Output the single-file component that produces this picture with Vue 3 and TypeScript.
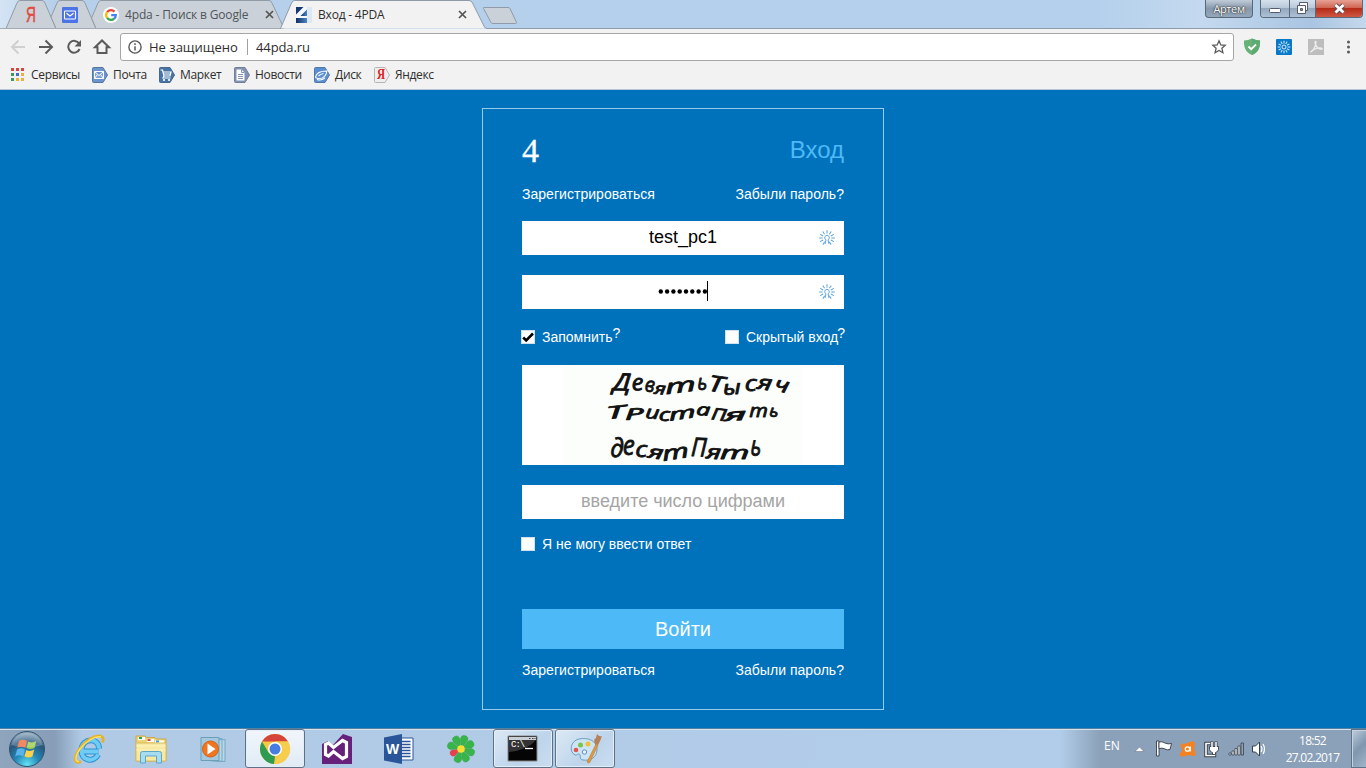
<script setup lang="ts">
import { ref } from 'vue'

interface Glyph {
  c: string
  x: number
  y: number
  size: number
  w: number
  rot: number
}

const g = (c: string, x: number, y: number, size: number, w: number, rot = 0): Glyph => ({ c, x, y, size, w, rot })

// Hand-placed letters of the captcha picture, in a 966 x 300 space
const glyphs: Glyph[] = [
  g('Д', 272, 76, 72, 52, 3), g('е', 330, 76, 68, 36, -4), g('в', 367, 80, 62, 30, 6), g('я', 396, 88, 50, 34, 6),
  g('т', 432, 82, 60, 92, -7), g('ь', 526, 76, 66, 30), g('Т', 556, 80, 66, 46, 8), g('ы', 604, 88, 60, 54, -4),
  g('с', 668, 79, 66, 36), g('я', 704, 74, 62, 44, 8), g('ч', 754, 80, 62, 44, 12),
  g('Т', 254, 160, 52, 56, -6), g('Р', 310, 163, 46, 56, -4), g('и', 369, 161, 54, 42, 5), g('с', 410, 167, 52, 34),
  g('т', 443, 162, 50, 80, -8), g('а', 522, 151, 50, 42, 3), g('П', 566, 166, 50, 44, 8), g('я', 608, 166, 50, 66, -3),
  g('т', 682, 156, 54, 56), g('ь', 740, 155, 50, 28, 6),
  g('д', 264, 276, 78, 40, 3), g('е', 302, 271, 80, 36), g('с', 340, 275, 68, 36), g('я', 376, 281, 56, 46, 8),
  g('т', 423, 282, 60, 80, -9), g('П', 506, 274, 78, 46, 3), g('я', 552, 282, 60, 44, 5), g('т', 594, 282, 56, 88),
  g('ь', 684, 272, 84, 33, 3),
]

const login = ref('test_pc1')
const dots = Array.from({ length: 8 }, (_, i) => i)
const rays = Array.from({ length: 12 }, (_, i) => i * 30)
const keyRays = [0, 33, 62, 90, 118, 148, 212, 242, 270, 298, 327]
const bookmarkDots = ['#d9453d', '#d9453d', '#d9453d', '#3a9b5c', '#3b6fd1', '#e9b33a', '#3a9b5c', '#e9b33a', '#e9b33a']
</script>

<template>
  <div class="screen">
    <header class="tabstrip">
      <svg class="tab-shapes" width="1366" height="29" viewBox="0 0 1366 29">
        <defs>
          <linearGradient id="frame" x1="0" x2="1" y1="0" y2="0">
            <stop offset="0" stop-color="#d4e4f4" />
            <stop offset=".04" stop-color="#b6d0eb" />
            <stop offset=".8" stop-color="#b4d0ec" />
            <stop offset=".88" stop-color="#c4d9ef" />
            <stop offset=".96" stop-color="#a9c5e2" />
            <stop offset="1" stop-color="#c5d8ec" />
          </linearGradient>
        </defs>
        <rect width="1366" height="29" fill="url(#frame)" />
        <g fill="#cad1d8" stroke="#919ba6">
          <path d="M6 28.500L17 3q1-2.500 3-2.500h22q2 0 3 2.500L56 28.500z" />
          <path d="M56 28.500L51 17 57 3q1-2.500 3-2.500h22q2 0 3 2.500L96 28.500z" />
          <path d="M96 28.500L91.500 18 98 3q1-2.500 3-2.500H269q2 0 3 2.500L284 28.500z" />
        </g>
        <path d="M484 7.500h24q1.500 0 2 1l6.500 14q.4 1-1 1H493q-1.500 0-2-1l-7.500-14q-.4-1 .5-1z" fill="#cad1d8" stroke="#8f9baa" />
        <path d="M0 28.500H280.500L291.500 3q1-2.500 3-2.500H469q2.500 0 3.500 2.500L484 26q1 2.500 3 2.500H1366" fill="#f2f2f2" stroke="#8e9aaa" />
        <path d="M0 28h280v1H0z" fill="#a2abb5" />
      </svg>
      <div class="tab pin1"><span class="ya">Я</span></div>
      <div class="tab pin2">
        <svg width="16" height="16" viewBox="0 0 16 16"><rect width="16" height="16" rx="1" fill="#4d74e6" /><rect x="2.500" y="4" width="11" height="8" rx=".8" fill="none" stroke="#fff" stroke-width="1.100" /><path d="M4.500 6.200L8 9l3.500-2.800" fill="none" stroke="#fff" stroke-width="1.300" /></svg>
      </div>
      <div class="tab google">
        <svg width="16" height="16" viewBox="0 0 16 16">
          <circle cx="8" cy="8" r="8" fill="#fff" />
          <g fill="none" stroke-width="2.300">
            <path d="M4.100 5.200A4.800 4.800 0 0 1 11.500 4.600" stroke="#ea4335" />
            <path d="M4.100 5.200A4.800 4.800 0 0 0 4.100 10.800" stroke="#fbbc05" />
            <path d="M4.100 10.800A4.800 4.800 0 0 0 11.200 11.600" stroke="#34a853" />
            <path d="M11.200 11.600A4.800 4.800 0 0 0 12.800 8.200H8.200" stroke="#4285f4" />
          </g>
        </svg>
        <span class="title">4pda - Поиск в Google</span>
        <svg class="x" width="9" height="9" viewBox="0 0 9 9"><path d="M1 1l7 7M8 1L1 8" /></svg>
      </div>
      <div class="tab active">
        <svg width="16" height="16" viewBox="0 0 16 16">
          <defs><linearGradient id="fav" x1="0" x2="1"><stop offset="0" stop-color="#102f63" /><stop offset="1" stop-color="#4a86c4" /></linearGradient></defs>
          <rect width="16" height="16" fill="#f4f8fc" /><path d="M11 0h5v16h-5z" fill="#dce9f5" />
          <path d="M0 0h7.500L0 7.500z" fill="#16386f" /><path d="M11 2.500V9H4.500z" fill="url(#fav)" /><path d="M0 11h11v5H0z" fill="url(#fav)" />
        </svg>
        <span class="title">Вход - 4PDA</span>
        <svg class="x" width="9" height="9" viewBox="0 0 9 9"><path d="M1 1l7 7M8 1L1 8" /></svg>
      </div>
      <div class="user">Артем</div>
      <div class="winbtns">
        <div class="wb min"><svg width="13" height="6" viewBox="0 0 13 6"><rect x=".5" y=".5" width="11" height="4" rx="1" fill="#fff" stroke="#555d6d" /></svg></div>
        <div class="wb max"><svg width="13" height="12" viewBox="0 0 13 12"><g fill="#fff" stroke="#555d6d"><path d="M3.500.5h8v8h-8z" /><path d="M1.500 3.500h8v8h-8z" /><path d="M4.500 6.500h2v2h-2z" fill="#8798ad" /></g></svg></div>
        <div class="wb close"><svg width="13" height="11" viewBox="0 0 13 11"><path d="M2.500 2l8 7.500M10.500 2l-8 7.500" stroke="#5b4b58" stroke-width="4.600" /><path d="M2.500 2l8 7.500M10.500 2l-8 7.500" stroke="#fff" stroke-width="2.800" /></svg></div>
      </div>
    </header>

    <div class="toolbar">
      <svg class="nav" width="112" height="34" viewBox="0 0 112 34" fill="none" stroke-width="2">
        <path d="M25 18H12.500M18.500 11.500L12 18l6.500 6.500" stroke="#d0d0d0" />
        <path d="M39 18h12.500M45.500 11.500L52 18l-6.500 6.500" stroke="#5a5a5a" />
        <path d="M79.200 14.700A5.900 5.900 0 1 0 79.600 20" stroke="#5a5a5a" />
        <path d="M81 11v6.500h-6.500z" fill="#5a5a5a" />
        <path d="M95 18.300l7-6.800 7 6.800h-2.500v5.700h-9v-5.700z" stroke="#5a5a5a" />
      </svg>
      <div class="omnibox">
        <svg width="14" height="14" viewBox="0 0 14 14"><circle cx="7" cy="7" r="6.100" fill="none" stroke="#5a5a5a" stroke-width="1.400" /><path d="M7 6.200v4.300M7 3.300v1.700" stroke="#5a5a5a" stroke-width="1.500" /></svg>
        <span class="secure">Не защищено</span>
        <span class="sep"></span>
        <span class="url">44pda.ru</span>
        <svg class="star" width="16" height="16" viewBox="0 0 16 16"><path d="M8 1.800l1.800 4.100 4.400.4-3.300 3 1 4.400L8 11.400l-3.900 2.300 1-4.400-3.300-3 4.400-.4z" fill="none" stroke="#5a5a5a" stroke-width="1.300" /></svg>
      </div>
      <svg class="ext" width="128" height="34" viewBox="0 0 128 34">
        <path d="M17 9.500q4 2 8 2c.6 7-2 12-8 14.500-6-2.500-8.600-7.500-8-14.500q4 0 8-2z" fill="#67b279" /><path d="M17 9.500q4 2 8 2c.6 7-2 12-8 14.500z" fill="#5dab70" /><path d="M13.500 17.500l2.700 2.700 4.800-4.700" fill="none" stroke="#fff" stroke-width="1.800" />
        <rect x="41" y="10" width="16" height="16" rx="1" fill="#0878c8" />
        <g transform="translate(49 18)" stroke="#d8eeff" stroke-width="1"><path v-for="a in rays" :key="a" d="M0-3.500V-6.300" :transform="`rotate(${a})`" /><circle r="2" fill="none" /></g>
        <rect x="73" y="10" width="16" height="16" fill="#bdbdbd" /><path d="M75.500 23c2-.5 5.500-5.500 5.500-9.500 0-2-1.500-1-.8 1 1.500 5 4 6 7 5.300-1.500-2-7-.8-11.700 3.200z" fill="none" stroke="#ededed" stroke-width="1.300" />
        <g fill="#5a5a5a"><circle cx="113.500" cy="13" r="1.500" /><circle cx="113.500" cy="18" r="1.500" /><circle cx="113.500" cy="23" r="1.500" /></g>
      </svg>
    </div>

    <nav class="bookmarks">
      <a class="bm apps"><svg width="13" height="13" viewBox="0 0 13 13"><rect v-for="(c, i) in bookmarkDots" :key="i" :x="(i % 3) * 5" :y="Math.floor(i / 3) * 5" width="3" height="3" :fill="c" /></svg><span>Сервисы</span></a>
      <a class="bm mail"><svg width="16" height="16" viewBox="0 0 16 16"><path d="M1.500.5H11l4.500 7.500L11 15.500H1.500q-1 0-1-1v-13q0-1 1-1z" fill="#6c94cc" stroke="#55779f" /><path d="M2.500 4.500h9v7h-9zM2.500 4.500l4.500 4 4.500-4M2.500 11.500l3-4M11.500 11.500l-3-4" fill="#7fa3d6" stroke="#fff" /></svg><span>Почта</span></a>
      <a class="bm market"><svg width="16" height="16" viewBox="0 0 16 16"><path d="M1.500.5H11l4.500 7.500L11 15.500H1.500q-1 0-1-1v-13q0-1 1-1z" fill="#4674a8" stroke="#456788" /><path d="M1.500 3h2l1.500 6h6l1-4H4.200M4.600 7h6.700M5 9l-1 2h7.500" fill="none" stroke="#fff" stroke-width="1.200" /><circle cx="5" cy="13" r="1.100" fill="#fff" /><circle cx="10" cy="13" r="1.100" fill="#fff" /></svg><span>Маркет</span></a>
      <a class="bm news"><svg width="16" height="16" viewBox="0 0 16 16"><path d="M1.500.5H11l4.500 7.500L11 15.500H1.500q-1 0-1-1v-13q0-1 1-1z" fill="#8292b3" stroke="#737f96" /><path d="M2.500 2.500h5l3 3v8h-8z" fill="#fff" /><path d="M7.500 2.500v3h3M4 7.500h5M4 9.500h5M4 11.500h5" fill="none" stroke="#8292b3" /></svg><span>Новости</span></a>
      <a class="bm disk"><svg width="16" height="16" viewBox="0 0 16 16"><path d="M1.500.5H11l4.500 7.500L11 15.500H1.500q-1 0-1-1v-13q0-1 1-1z" fill="#5b8ed0" stroke="#5478a5" /><path d="M1.500 10c1-5 6-6 11.500-6-1 5-4 8-9 7.500-1.500-.2-2.500-.7-2.500-1.500zM3 12.500q4 1.500 8-1.500M4.500 9q2-2 5-2.500" fill="none" stroke="#fff" stroke-width="1.100" /></svg><span>Диск</span></a>
      <a class="bm yandex"><span class="yabox"><svg width="16" height="16" viewBox="0 0 16 16"><path d="M1.500.5H11l4.500 7.500L11 15.500H1.500q-1 0-1-1v-13q0-1 1-1z" fill="#eee" stroke="#b8b4b4" /></svg><b>Я</b></span><span>Яндекс</span></a>
    </nav>

    <main class="page">
      <form class="card" @submit.prevent>
        <div class="head"><span class="logo">4</span><h1>Вход</h1></div>
        <div class="links"><a>Зарегистрироваться</a><a>Забыли пароль?</a></div>
        <div class="field f1">
          <span>{{ login }}</span>
          <svg class="key" width="18" height="18" viewBox="-9 -9 18 18"><g fill="none" stroke="#5ba3da" stroke-width="1"><path v-for="a in keyRays" :key="a" d="M0-4.400V-7.800" :transform="`rotate(${a})`" /><path d="M-1 1.800A2.300 2.300 0 1 1 1 1.800L2 6M-1 1.800L-2 6" /></g></svg>
        </div>
        <div class="field f2">
          <svg class="pass" width="50" height="22" viewBox="0 0 50 22"><circle v-for="i in dots" :key="i" :cx="2.800 + i * 6.300" cy="11.500" r="2.200" /><path d="M49.500 1v20" stroke="#000" /></svg>
          <svg class="key" width="18" height="18" viewBox="-9 -9 18 18"><g fill="none" stroke="#5ba3da" stroke-width="1"><path v-for="a in keyRays" :key="a" d="M0-4.400V-7.800" :transform="`rotate(${a})`" /><path d="M-1 1.800A2.300 2.300 0 1 1 1 1.800L2 6M-1 1.800L-2 6" /></g></svg>
        </div>
        <div class="checks">
          <label><span class="box"><svg width="12" height="12" viewBox="0 0 12 12"><path d="M1.200 6.500l3 3L11 2.500" fill="none" stroke="#000" stroke-width="2.600" /></svg></span>Запомнить<sup>?</sup></label>
          <label class="hidden-login"><span class="box"></span>Скрытый вход<sup>?</sup></label>
        </div>
        <div class="captcha">
          <svg width="322" height="100" viewBox="0 0 966 300">
            <rect x="124" width="716" height="300" fill="#fcfefc" />
            <text v-for="(t, i) in glyphs" :key="i" :x="t.x" :y="t.y" :font-size="t.size" :textLength="t.w" :transform="`rotate(${t.rot} ${t.x + t.w / 2} ${t.y})`" lengthAdjust="spacingAndGlyphs">{{ t.c }}</text>
          </svg>
        </div>
        <div class="field f3"><span>введите число цифрами</span></div>
        <div class="checks cannot"><label><span class="box"></span>Я не могу ввести ответ</label></div>
        <button class="submit">Войти</button>
        <div class="links bottom"><a>Зарегистрироваться</a><a>Забыли пароль?</a></div>
      </form>
    </main>

    <footer class="taskbar">
      <div class="task start">
        <svg width="38" height="38" viewBox="0 0 38 38">
          <defs>
            <radialGradient id="orb" cx=".5" cy=".95" r=".9"><stop offset="0" stop-color="#65e4f5" /><stop offset=".4" stop-color="#2386b5" /><stop offset=".75" stop-color="#2a567d" /><stop offset="1" stop-color="#8ba6bb" /></radialGradient>
          </defs>
          <circle cx="19" cy="19" r="17.500" fill="url(#orb)" stroke="#33536d" />
          <path d="M11 11q4-2.500 8 0l-1.700 7q-4-2.500-8 0z" fill="#ee6a34" />
          <path d="M20.300 11.600q4 2 8-.5l-1.800 7q-4 2-8-.2z" fill="#9ccc48" />
          <path d="M9 19.500q4-2.500 8 0l-1.800 7q-4-2.500-8 0z" fill="#5ab2ea" />
          <path d="M18.300 20q4 2 8-.5l-1.900 7q-4 2-8-.3z" fill="#fbd04b" />
          <path d="M3.500 15a16 16 0 0 1 31 0q-15 5-31 0z" fill="#fff" opacity=".22" />
        </svg>
      </div>
      <div class="task">
        <svg width="34" height="34" viewBox="0 0 34 34"><path d="M26.500 19.500H10.500M27 16.500c0-11-16.500-11-17.500 1-.8 12 13 13 16.500 5" fill="none" stroke="#2f93d3" stroke-width="6" /><path d="M26.500 19.500H10.500M27 16.500c0-11-16.500-11-17.500 1-.8 12 13 13 16.500 5" fill="none" stroke="#6fccf5" stroke-width="4" /><path d="M9 29.500C2 32.500 1 26 7.500 17 14 8 24 2 29.500 4.500c2 1 2 3.500 1 6" fill="none" stroke="#e4b128" stroke-width="2.800" /><path d="M7 29.500C2.500 30 3 24 8 17 14 9 23 3.500 29 5" fill="none" stroke="#fce166" stroke-width="1.300" /></svg>
      </div>
      <div class="task">
        <svg width="36" height="34" viewBox="0 0 36 34"><path d="M3 7.500V4h9l1.500 1.500H22L23.500 7H33v22H3z" fill="#eed477" stroke="#c9a94b" /><path d="M5 5h7v3H5zM14 7h7v3h-7zM22 8.500h9v3h-9z" fill="#fff" /><path d="M6 5h3v2H6z" fill="#2ba24b" /><path d="M14.500 7h3v2h-3z" fill="#d44b36" /><path d="M23 8.500h3v2h-3z" fill="#3c9bdb" /><path d="M3 11h30v18H3z" fill="#f8e9a2" stroke="#d6bc65" /><path d="M3.500 14h29M3.500 18h29" stroke="#fff4bf" /><path d="M7.500 31V21.500q0-2 2-2h17q2 0 2 2V31h-5v-7h-11v7z" fill="#a8dcf1" stroke="#5fa5c8" /></svg>
      </div>
      <div class="task">
        <svg width="34" height="34" viewBox="0 0 34 34"><path d="M12 8.500l17-1v22l-17-1zM9 8l17-1.500v23L9 28z" fill="#b6d8e9" stroke="#76a8c1" /><path d="M5 5.500h18v23H5z" fill="#a4c9de" stroke="#6a9eb9" /><circle cx="14.500" cy="17" r="8" fill="#f17622" stroke="#d86113" /><path d="M11.500 11.500l8 5.500-8 5.500z" fill="#fff" /></svg>
      </div>
      <div class="task open chrome">
        <svg width="32" height="32" viewBox="-16 -16 32 32"><circle r="15" fill="#f6c845" /><path d="M-13-7.500A15 15 0 0 1 13-7.500H0z" fill="#d64539" /><path d="M-13-7.500L-6.500 3.500 0 7.500-1 15A15 15 0 0 1-13-7.500z" fill="#2f9b50" /><path d="M13-7.500H0V0l6.500 3.700L-1 15A15 15 0 0 0 13-7.500z" fill="#f7cd4e" /><circle r="7" fill="#fff" /><circle r="5.500" fill="#477de0" /></svg>
      </div>
      <div class="task">
        <svg width="32" height="34" viewBox="0 0 32 34"><path d="M1 12L7 9l5 4L22 2l9 3v27H1z" fill="#68217a" /><path d="M4.500 12.500v10l3 1.500 5-4.500 9 7 4-2v-14l-4-2-9 7-5-4.500z" fill="none" stroke="#fff" stroke-width="3.200" /><path d="M21 11.500v12l-8-6z" fill="#68217a" /></svg>
      </div>
      <div class="task">
        <span class="word"><svg width="34" height="34" viewBox="0 0 34 34"><path d="M19 6h12v22H19z" fill="#fff" stroke="#2a5699" /><path d="M19 9.500h9.500M19 12.500h9.500M19 15.500h9.500M19 18.500h9.500M19 21.500h9.500M19 24.500h9.500" stroke="#2a5699" stroke-width="1.300" /><path d="M2 5.500L20 2v30L2 28.500z" fill="#2a5699" /></svg><b>W</b></span>
      </div>
      <div class="task">
        <svg width="34" height="34" viewBox="-17 -17 34 34"><g stroke="#249a3a" stroke-width=".4"><path v-for="a in [0, 45, 90, 135, 180, 225, 270, 315]" :key="a" d="M0-1L-3.600-9.500Q-4-14 0-14 4-14 3.600-9.500z" :fill="a === 225 ? '#e8404c' : '#38b549'" :stroke="a === 225 ? '#d63842' : '#249a3a'" :transform="`rotate(${a + 18})${a === 225 ? ' scale(.85)' : ''}`" /></g><circle r="3.800" fill="#f8df33" /></svg>
      </div>
      <div class="task open cmd">
        <span class="console"><svg width="32" height="28" viewBox="0 0 32 28"><path d="M1 1h29v25H1z" fill="#050505" stroke="#888" /><path d="M2 2h27v3H2z" fill="#c8d0d5" /><path d="M22 3.500h1.500M25 3.500h1.500M27.500 3.500h1" stroke="#444" /><path d="M2 5h27q-8 10-27 12z" fill="#333" /><path d="M18 13.500h8" stroke="#fff" stroke-width="1.300" /></svg><b>C:\</b></span>
      </div>
      <div class="task open paint">
        <svg width="36" height="34" viewBox="0 0 36 34"><path d="M8 23C2 20 3 9 12 7c9-2 18 2 18 10 0 9-7 12-14 11-5-1-1-5-4-6-1.500-.5-2 1.500-4 1z" fill="#cce4f4" stroke="#6e9fc1" /><circle cx="9" cy="18" r="2.300" fill="#e2534a" /><circle cx="13.500" cy="13" r="2.500" fill="#7cc447" /><circle cx="21" cy="12" r="2.500" fill="#f0bf3c" /><circle cx="17.500" cy="20" r="2.200" fill="#e8f4fa" stroke="#5b91c5" /><path d="M20 30l9-18 2 1-8 17q-1.500 2-3 0z" fill="#e19a41" stroke="#b8762e" stroke-width=".6" /><path d="M28 12q-2-5 1-6l1-4q2 3 5 2-2 6-4 9z" fill="#b78058" /></svg>
      </div>
      <div class="tray">
        <span class="lang">EN</span>
        <svg width="135" height="38" viewBox="0 0 135 38">
          <path d="M5 22.500l4.500-4.500 4.500 4.500z" fill="#fff" stroke="#5b6c80" stroke-width=".5" />
          <g stroke="#353c45" stroke-width=".9" fill="#fff"><path d="M26.500 12h2.500v15h-2.500z" /><path d="M29 13q3-1 6 1 3 1.500 6.500.5l-1.500 6q-3 1-5-.5-3-1.500-6-.5z" /></g>
          <path d="M51.500 14.500q3 1 5.500-.5 3-2 6.500-1.500 2 .5 1.500 3-1.500 3-.5 5.500 1.500 3 1 5.500-3 1-5.500-.5-3 0-6 1.500-3.500.5-4.500-1.500 0-2 2-3.500 1-2 0-4-1.500-2 0-4z" fill="#f58220" /><circle cx="57.500" cy="20" r="2.200" fill="none" stroke="#fff" stroke-width="1.300" /><path d="M60.300 17.500v5" stroke="#fff" stroke-width="1.200" />
          <path d="M80.500 14.500H76v12h8.500v-2.500" fill="none" stroke="#343c46" stroke-width="3.400" /><path d="M80.500 14.500H76v12h8.500v-2.500" fill="none" stroke="#fff" stroke-width="1.600" />
          <path d="M79.500 17.500h9v3q-.5 2.500-3 3v2h-3v-2q-2.500-.5-3-3z" fill="#fff" stroke="#343c46" stroke-width=".9" /><path d="M82 17v-4.500M86 17v-4.500" stroke="#343c46" stroke-width="3" /><path d="M82 18v-5M86 18v-5" stroke="#fff" stroke-width="1.500" />
          <g fill="#fff" stroke="#38434f" stroke-width=".8"><path d="M99 24h2v2h-2zM102 22h2v4h-2zM105 19.500h2v6.500h-2zM108 17h2v9h-2z" /><path d="M111 14h2.500v12H111z" fill="#91a0b0" /></g>
          <path d="M122.500 17h3l4-4v14l-4-4h-3z" fill="#fff" stroke="#353f4a" /><path d="M131 17q2 3 0 6M133 15q3 5 0 10" fill="none" stroke="#fff" stroke-width="1.200" />
        </svg>
        <div class="clock"><span>18:52</span><span>27.02.2017</span></div>
        <div class="peek"></div>
      </div>
    </footer>
  </div>
</template>

<style>
html, body { overflow: hidden; }
</style>

<style scoped>
* { box-sizing: border-box; }
.screen { width: 1366px; height: 768px; display: flex; flex-direction: column; background: #0072bc; overflow: hidden; font-family: "Open Sans", "Noto Sans", sans-serif; color: #2d2d2d; }
.tabstrip { height: 29px; flex: none; position: relative; display: flex; }
.tab-shapes { position: absolute; left: 0; top: 0; }
.tab { position: relative; height: 29px; display: flex; align-items: center; font-size: 12px; }
.tab svg { flex: none; }
.pin1 { width: 51px; padding-left: 23px; }
.ya { color: #df4b3f; font: 22px/28px "Liberation Sans", sans-serif; transform: scaleX(.62); -webkit-text-stroke: .5px #df4b3f; }
.pin2 { width: 46px; padding-left: 11px; }
.google { width: 190px; padding-left: 6px; color: #50555a; }
.active { width: 202px; padding-left: 9px; }
.title { margin-left: 6px; white-space: nowrap; letter-spacing: -.15px; }
.active .title { letter-spacing: -.2px; }
.tab .x { margin-left: auto; fill: none; stroke: #555; stroke-width: 1.700; }
.google .x { margin-right: 13px; }
.active .x { margin-right: 22px; }
.user { position: relative; margin-left: 716px; width: 48px; height: 18px; border: 1px solid #59687b; border-top: 0; border-radius: 0 0 4px 4px; background: linear-gradient(#c0ccd9, #8798aa 50%, #94a7bb); color: #fff; text-shadow: 0 0 2px #222, 0 0 1px #222; font-size: 11px; line-height: 18px; text-align: center; letter-spacing: -.4px; }
.winbtns { position: relative; margin-left: 7px; width: 103px; height: 18px; display: flex; border: 1px solid #59687b; border-top: 0; border-radius: 0 0 4px 4px; overflow: hidden; }
.wb { display: flex; justify-content: center; background: linear-gradient(#d5e1ed, #b7c7d8 48%, #94a8bd 50%, #adc1d6); }
.wb + .wb { border-left: 1px solid #59687b; }
.min { width: 28px; align-items: flex-end; padding-bottom: 3px; }
.max { width: 26px; align-items: center; padding-bottom: 2px; }
.close { width: 47px; align-items: center; padding-bottom: 1px; background: linear-gradient(#e6a193, #cf6553 46%, #b62b18 50%, #cd5844); }
.toolbar { height: 34px; flex: none; display: flex; align-items: flex-start; background: #f2f2f2; }
.nav { width: 112px; height: 34px; flex: none; margin-right: 8px; }
.ext { height: 34px; margin-left: 1px; }
.omnibox { width: 1114px; height: 28px; margin-top: 4px; background: #fff; border: 1px solid #a6a6a6; border-radius: 3px; display: flex; align-items: center; padding: 0 6px 0 7px; font-size: 13px; }
.secure { margin-left: 7px; width: 89px; white-space: nowrap; letter-spacing: .02px; }
.sep { width: 1px; height: 16px; margin-left: 9px; background: #a0a0a0; }
.url { margin-left: 8px; letter-spacing: -.1px; }
.star { margin-left: auto; }
.bookmarks { height: 27px; flex: none; background: #f2f2f2; border-bottom: 1px solid #b6c6d4; display: flex; align-items: center; padding-bottom: 3px; font-size: 12px; letter-spacing: -.33px; }
.bm { display: flex; align-items: center; white-space: nowrap; }
.bm svg { flex: none; }
.bm > span:last-child { margin-left: 5px; }
.apps > span:last-child { margin-left: 7px; }
.apps { width: 92px; padding-left: 11px; }
.mail { width: 67px; }
.market { width: 75px; }
.news { width: 80px; }
.disk { width: 60px; }
.yabox { position: relative; display: flex; }
.yabox b { position: absolute; left: 3px; top: 0; color: #df2027; font: bold 14px/16px "Liberation Serif", serif; transform: scaleX(.8); transform-origin: 0 0; }
.page { height: 638px; flex: none; display: flex; justify-content: center; align-items: flex-start; background: #0072bc; font-family: "Liberation Sans", Arial, sans-serif; }
.card { width: 402px; height: 602px; margin-top: 18px; border: 1px solid #99cbea; padding: 0 39px; display: flex; flex-direction: column; color: #fff; font-size: 14px; }
.head { height: 75px; flex: none; display: flex; justify-content: space-between; }
.logo { font: 34px/84px "Liberation Serif", serif; -webkit-text-stroke: .3px #fff; }
h1 { margin: 0; color: #4eb9f7; font-weight: 400; font-size: 24px; line-height: 82px; }
.links { display: flex; justify-content: space-between; height: 20px; line-height: 20px; flex: none; letter-spacing: .03px; }
.field { position: relative; flex: none; height: 34px; background: #fff; color: #000; font-size: 18px; line-height: 32px; display: flex; justify-content: center; }
.f1 { margin-top: 17px; }
.f2 { margin-top: 20px; align-items: flex-start; }
.pass { margin-top: 5px; }
.f3 { margin-top: 20px; color: #a5a5a5; }
.key { position: absolute; right: 8px; top: 8px; }
.checks { height: 20px; margin-top: 18px; display: flex; justify-content: space-between; line-height: 20px; }
.checks label { display: flex; align-items: center; }
.box { width: 14px; height: 14px; margin: 0 7px 0 -1px; background: #fff; border: 1px solid #cfe0ee; display: flex; }
.checks sup { font-size: 14px; line-height: 14px; align-self: flex-start; margin-top: -1px; }
.hidden-login { margin-right: -1px; }
.hidden-login sup { margin-left: -1px; }
.hidden-login { letter-spacing: .01px; }
.captcha { height: 100px; margin-top: 18px; background: #fff; flex: none; }
.captcha svg { display: block; }
.captcha text { font-family: "Open Sans", "Noto Sans", sans-serif; font-style: italic; fill: #111; stroke: #111; stroke-width: 2.5; stroke-linejoin: round; }
.cannot { margin-top: 15px; }
.submit { margin: 55px 0 0; height: 40px; flex: none; border: 0; padding: 0; background: #4eb9f7; color: #fff; font: 20px/40px "Liberation Sans", sans-serif; }
.bottom { margin-top: 11px; }
.taskbar { height: 40px; flex: none; display: flex; border-top: 1px solid #55809f; box-shadow: inset 0 1px #d3e3f2; background: linear-gradient(90deg, #8fa4bd 0, #889eb8 55px, #b0cae5 82px, #b2cde9 1060px, #8ba1b9 1100px, #8ba1b9 100%); }
.task { width: 62px; height: 39px; flex: none; display: flex; align-items: center; justify-content: center; }
.start { width: 58px; padding-right: 5px; }
.open { border: 1px solid #5e7186; border-radius: 3px; background: linear-gradient(135deg, #dce9f5, #bdd4ea 60%, #cbdef0); box-shadow: inset 0 0 0 1px #e3eef8; width: 60px; margin: 0 1px; }
.chrome { background: linear-gradient(#f1f6fb, #e1ebf5); }
.word, .console { position: relative; display: flex; }
.word b { position: absolute; left: 4px; top: 8px; color: #fff; font: bold 14px/18px "Liberation Sans", sans-serif; }
.console b { position: absolute; left: 4px; top: 5px; color: #fff; font: 9px/10px "Liberation Mono", monospace; letter-spacing: -1px; }
.tray { margin-left: auto; display: flex; color: #fff; }
.lang { width: 26px; font-size: 12px; line-height: 34px; }
.clock { width: 86px; display: flex; flex-direction: column; align-items: center; font-size: 12px; line-height: 17px; padding: 3px 0 0 9px; letter-spacing: -.75px; }
.peek { width: 15px; height: 39px; border: 1px solid #5f7388; border-right: 0; background: linear-gradient(135deg, #becddc, #7f96ae 50%, #a1b4c8); box-shadow: inset 1px 1px #c5d2df; }
</style>
